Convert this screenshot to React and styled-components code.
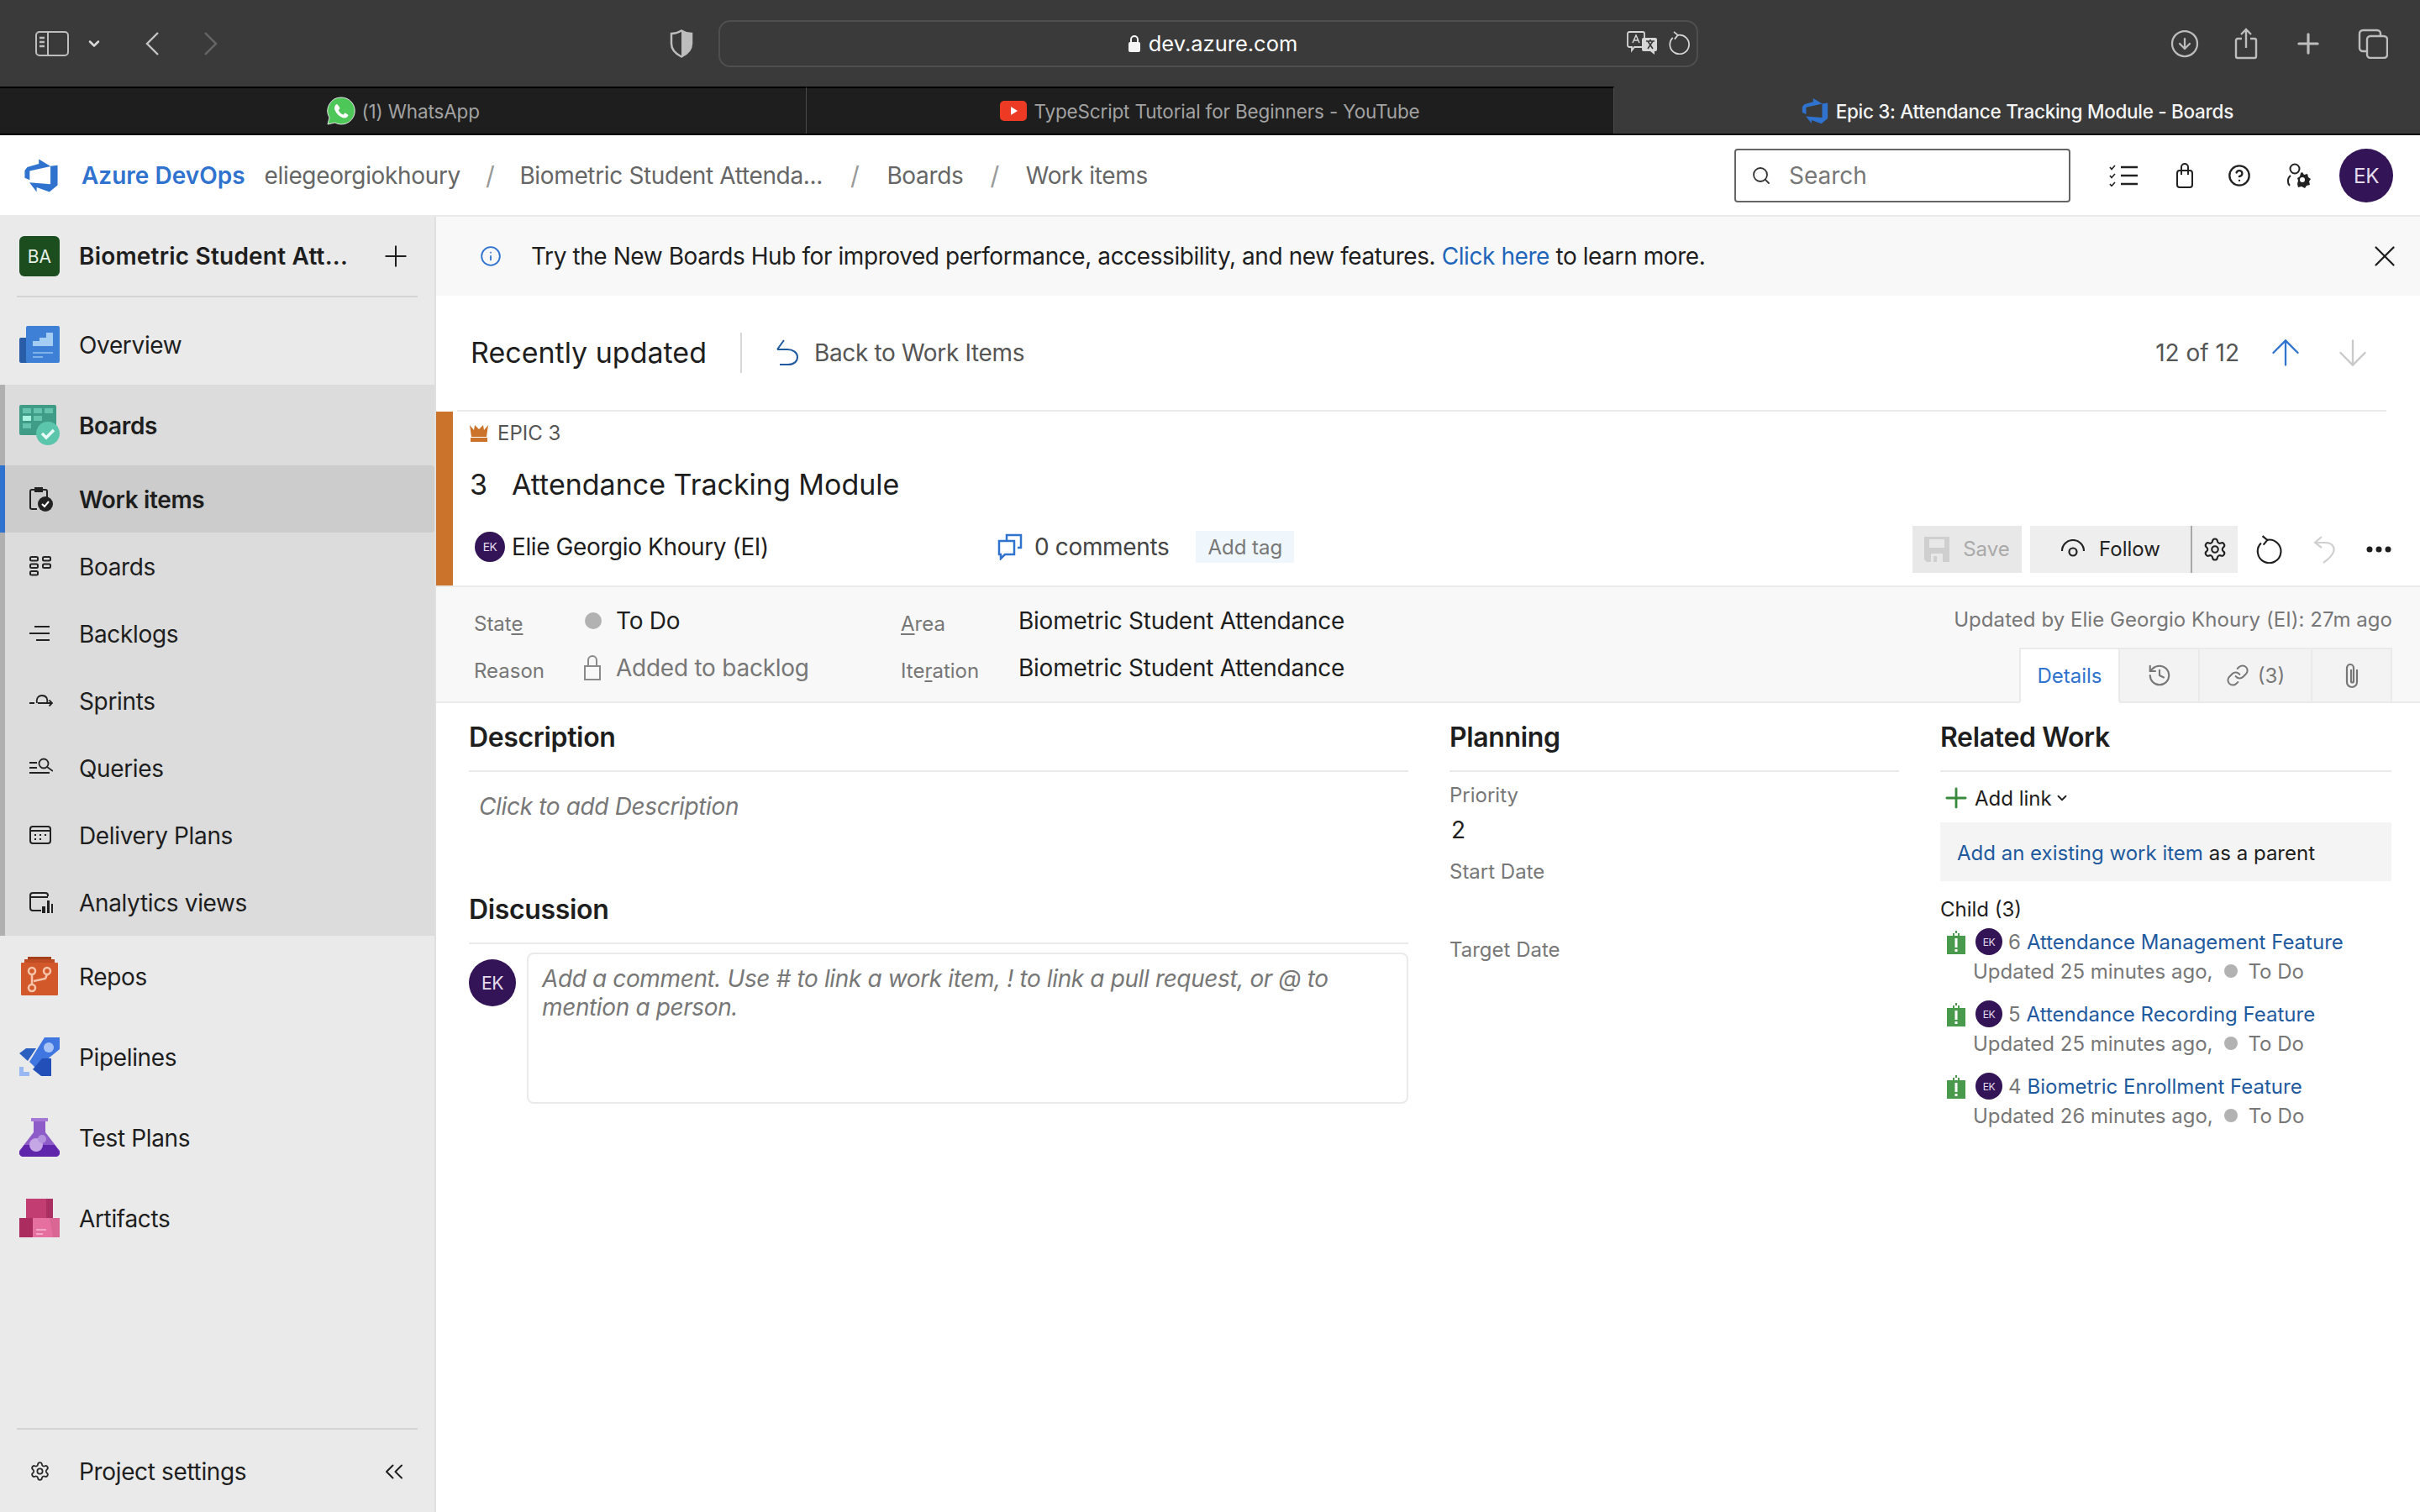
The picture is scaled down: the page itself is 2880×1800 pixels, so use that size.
import styled, { createGlobalStyle } from 'styled-components'
import {
  ArrowDown, ArrowUp, ChevronDown, ChevronsLeft, CircleArrowDown, CircleHelp,
  History, Info, Link, Plus, Search, Settings, X,
} from 'lucide-react'

const GlobalStyle = createGlobalStyle`
  html, body { margin: 0; padding: 0; background: #fff; }
  body { font-family: Inter, "Noto Sans", "Liberation Sans", sans-serif; letter-spacing: -0.35px; overflow: hidden; }
  * { box-sizing: border-box; }
`

const Page = styled.div`
  width: 2880px;
  height: 1800px;
  display: flex;
  flex-direction: column;
  overflow: hidden;
`

/* browser chrome */
const Toolbar = styled.div`
  height: 103px;
  background: #3a3a3a;
  display: flex;
  align-items: center;
  padding: 0 38px 0 42px;
  color: #bdbdbd;
`

const ToolGroup = styled.div`
  display: flex;
  align-items: center;
  gap: ${props => props.$gap || 0}px;
  width: ${props => props.$width ? props.$width + 'px' : 'auto'};
  margin-left: ${props => props.$push ? 'auto' : '0'};
`

const AddressBar = styled.div`
  width: 1166px;
  height: 56px;
  margin-left: 30px;
  padding-left: 10px;
  border: 2px solid #4f4f4f;
  border-radius: 14px;
  display: flex;
  align-items: center;
  justify-content: center;
  position: relative;
  color: #fff;
  font-size: 25.5px;
  letter-spacing: 0;
  gap: 9px;
`

const AddressTools = styled.div`
  position: absolute;
  right: 6px;
  top: 11px;
  display: flex;
  align-items: center;
  gap: 11px;
  color: #d6d6d6;
`

const TabStrip = styled.div`
  height: 58px;
  display: flex;
  background: #1e1e1e;
  border-bottom: 2px solid #000;
`

const BrowserTab = styled.div`
  flex: 1;
  display: flex;
  align-items: center;
  justify-content: center;
  gap: 8px;
  font-size: 22.5px;
  letter-spacing: ${props => props.$active ? -0.3 : -0.15}px;
  font-weight: ${props => props.$active ? 500 : 400};
  color: ${props => props.$active ? '#f4f4f4' : '#a2a2a2'};
  background: ${props => props.$active ? '#3a3a3a' : '#1e1e1e'};
  border-top: 2px solid ${props => props.$active ? '#3a3a3a' : '#000'};
  border-right: ${props => props.$active ? 'none' : '1px solid #4a4a4a'};
`

/* azure header */
const AppHeader = styled.header`
  height: 97px;
  background: #fff;
  border-bottom: 2px solid #eaeaea;
  display: flex;
  align-items: center;
  padding: 0 32px 0 27px;
  font-size: 28px;
  color: #666;
`

const Brand = styled.span`
  font-weight: 600;
  color: #2f73cf;
  margin: 0 23px 0 26px;
  letter-spacing: 0;
`

const Crumb = styled.span`
  white-space: nowrap;
`

const CrumbSlash = styled.span`
  color: #999;
  margin: 0 ${props => props.$gap}px;
  font-size: 30px;
`

const SearchBox = styled.div`
  width: 400px;
  height: 64px;
  margin-left: auto;
  border: 2px solid #666;
  border-radius: 4px;
  display: flex;
  align-items: center;
  gap: 21px;
  padding-left: 18px;
  color: #777;
  font-size: 28px;
  letter-spacing: 0;
`

const HeaderIcons = styled.div`
  display: flex;
  align-items: center;
  gap: 41px;
  margin: 0 34px 0 46px;
  color: #222;
`

const ChecklistSlot = styled.div`
  display: flex;
  margin-right: 5px;
`

const Avatar = styled.div`
  width: ${props => props.$size}px;
  height: ${props => props.$size}px;
  border-radius: 50%;
  background: #321457;
  color: #e4dcec;
  flex: none;
  display: flex;
  align-items: center;
  justify-content: center;
  font-size: ${props => props.$size * 0.38}px;
  letter-spacing: -0.5px;
`

const Body = styled.div`
  flex: 1;
  display: flex;
  min-height: 0;
`

/* project sidebar */
const Sidebar = styled.aside`
  width: 519px;
  flex: none;
  background: #eaeaea;
  border-right: 2px solid #e0e0e0;
  display: flex;
  flex-direction: column;
  color: #1e1e1e;
  font-size: 28px;
`

const ProjectHead = styled.div`
  height: 94px;
  display: flex;
  align-items: center;
  padding: 0 26px 0 23px;
  font-weight: 600;
  letter-spacing: 0.2px;
`

const ProjectBadge = styled.div`
  width: 48px;
  height: 48px;
  margin-right: 23px;
  background: #1c4d1f;
  border-radius: 6px;
  color: #e6f0e6;
  font-size: 21px;
  font-weight: 400;
  display: flex;
  align-items: center;
  justify-content: center;
`

const ProjectName = styled.span`
  flex: 1;
  white-space: nowrap;
`

const Rule = styled.div`
  height: 2px;
  margin: 0 20px;
  background: #d4d4d4;
`

const NavList = styled.nav`
  margin-top: 8px;
  display: flex;
  flex-direction: column;
`

const NavRow = styled.div`
  height: ${props => props.$sub ? 80 : 96}px;
  padding-top: 2px;
  display: flex;
  align-items: center;
  font-weight: ${props => props.$bold ? 600 : 400};
`

const NavIcon = styled.div`
  width: 94px;
  flex: none;
  margin-top: -2px;
  padding-left: ${props => props.$sub ? 35 : 23}px;
  display: flex;
  align-items: center;
  color: #2a2a2a;
`

const NavSection = styled.div`
  background: #dcdcdc;
  border-left: 6px solid #b0b0b0;
`

const SectionRow = styled(NavRow)`
  margin-left: -6px;
  border-radius: 0 4px 4px 0;
  border-left: 6px solid ${props => props.$selected ? '#2f73cf' : 'transparent'};
  background: ${props => props.$selected ? '#cccccc' : 'transparent'};
  ${NavIcon} { margin-left: -6px; }
`

const SideFooter = styled.div`
  margin-top: auto;
`

const FooterRow = styled.div`
  height: 98px;
  display: flex;
  align-items: center;
  padding: 2px 30px 0 0;
`

const FooterLabel = styled.span`
  flex: 1;
`

/* main */
const Main = styled.main`
  flex: 1;
  min-width: 0;
  display: flex;
  flex-direction: column;
  color: #1e1e1e;
`

const Banner = styled.div`
  height: 94px;
  background: #f8f8f8;
  display: flex;
  align-items: center;
  padding: 0 21px 0 52px;
  font-size: 28px;
  letter-spacing: -0.42px;
`

const BannerText = styled.span`
  flex: 1;
  margin-left: 35px;
`

const BlueLink = styled.span`
  color: ${props => props.$dark ? '#1f5a9e' : '#1f66bb'};
`

const TitleBar = styled.div`
  height: 136px;
  display: flex;
  align-items: center;
  padding: 0 55px 0 41px;
`

const RecentTitle = styled.h1`
  margin: 0;
  font-size: 34px;
  font-weight: 400;
  letter-spacing: 0;
  padding-right: 40px;
  border-right: 2px solid #d8d8d8;
  line-height: 48px;
`

const BackLink = styled.div`
  display: flex;
  align-items: center;
  gap: 18px;
  margin-left: 40px;
  font-size: 28px;
  color: #555;
`

const Pager = styled.div`
  margin-left: auto;
  display: flex;
  align-items: center;
  gap: 30px;
  font-size: 28px;
  letter-spacing: 0;
  color: #555;
`

const ItemRule = styled.div`
  height: 2px;
  margin: 0 40px 0 25px;
  background: #eaeaea;
`

const ItemHead = styled.div`
  height: 207px;
  border-left: 20px solid #cb732b;
  padding: 0 17px 0 20px;
  display: flex;
  flex-direction: column;
`

const EpicTag = styled.div`
  height: 50px;
  display: flex;
  align-items: center;
  gap: 11px;
  font-size: 24px;
  letter-spacing: 0;
  color: #555;
`

const ItemTitle = styled.div`
  height: 72px;
  display: flex;
  align-items: center;
  gap: 29px;
  font-size: 34px;
  letter-spacing: 0;
`

const ItemMeta = styled.div`
  height: 70px;
  margin-top: 4px;
  display: flex;
  align-items: center;
  font-size: 28px;
`

const Assignee = styled.div`
  width: 628px;
  padding-left: 6px;
  display: flex;
  align-items: center;
  gap: 8px;
  letter-spacing: -0.4px;
`

const CommentCount = styled.div`
  display: flex;
  align-items: center;
  gap: 14px;
  color: #444;
`

const TagChip = styled.span`
  margin-left: 32px;
  height: 38px;
  padding: 0 14px;
  background: #eff6fc;
  color: #777;
  font-size: 24px;
  letter-spacing: 0;
  display: flex;
  align-items: center;
`

const ItemActions = styled.div`
  margin: 5px 0 0 auto;
  display: flex;
  align-items: center;
`

const ActionButton = styled.div`
  height: 56px;
  display: flex;
  align-items: center;
  justify-content: center;
  gap: 16px;
  width: ${props => props.$width}px;
  margin-right: ${props => props.$gap || 0}px;
  background: ${props => props.$muted ? '#e8e8e8' : '#eeeeee'};
  color: ${props => props.$muted ? '#aaa' : '#222'};
  border-left: ${props => props.$split ? '2px solid #a8a8a8' : 'none'};
  font-size: 24px;
  letter-spacing: 0;
`

const PlainAction = styled.div`
  width: 65px;
  display: flex;
  justify-content: center;
  color: ${props => props.$muted ? '#cfcfcf' : '#1e1e1e'};
`

const FieldBand = styled.div`
  height: 140px;
  background: #f8f8f8;
  border-top: 2px solid #eaeaea;
  border-bottom: 2px solid #eaeaea;
  display: flex;
  justify-content: space-between;
  padding: 12px 33px 0 45px;
`

const FieldGrid = styled.div`
  display: grid;
  grid-template-columns: 131px 377px 140px auto;
  grid-template-rows: 56px 56px;
  align-items: center;
  font-size: 28px;
  letter-spacing: -0.25px;
`

const FieldLabel = styled.span`
  font-size: 24px;
  letter-spacing: 0;
  color: #777;
  padding-top: 6px;
  u { text-underline-offset: 3px; }
`

const FieldValue = styled.span`
  display: flex;
  align-items: center;
  gap: ${props => props.$gap || 18}px;
  color: ${props => props.$muted ? '#777' : '#1e1e1e'};
`

const StateDot = styled.span`
  width: ${props => props.$size || 20}px;
  height: ${props => props.$size || 20}px;
  margin: 0 ${props => props.$side || 0}px;
  border-radius: 50%;
  background: #b2b2b2;
  flex: none;
`

const BandRight = styled.div`
  display: flex;
  flex-direction: column;
  align-items: flex-end;
`

const UpdatedBy = styled.div`
  font-size: 24px;
  letter-spacing: 0.05px;
  color: #777;
  height: 52px;
  display: flex;
  align-items: center;
`

const DetailTabs = styled.div`
  display: flex;
  margin-top: auto;
  margin-bottom: -2px;
  height: 66px;
`

const DetailTab = styled.div`
  width: ${props => props.$width}px;
  display: flex;
  align-items: center;
  justify-content: center;
  gap: 10px;
  font-size: 24px;
  letter-spacing: 0;
  color: ${props => props.$active ? '#2f73cf' : '#777'};
  background: ${props => props.$active ? '#fff' : '#f3f3f3'};
  border: 2px solid #eaeaea;
  border-left-width: ${props => props.$first ? 2 : 0}px;
  border-bottom-color: ${props => props.$active ? '#fff' : '#eaeaea'};
`

const Columns = styled.div`
  flex: 1;
  display: grid;
  grid-template-columns: 1118px 535px 537px;
  column-gap: 49px;
  padding: 0 33px 0 39px;
`

const Column = styled.section`
  display: flex;
  flex-direction: column;
`

const SectionHead = styled.h2`
  margin: 0;
  height: 82px;
  display: flex;
  align-items: center;
  font-size: 32px;
  font-weight: 600;
  border-bottom: 2px solid #eaeaea;
  color: #1e1e1e;
`

const EmptyText = styled.div`
  height: 123px;
  padding: 24px 12px;
  font-size: 28px;
  font-style: italic;
  color: #777;
`

const CommentRow = styled.div`
  display: flex;
  gap: 13px;
  margin-top: 10px;
`

const CommentAvatarSlot = styled.div`
  padding-top: 8px;
`

const CommentBox = styled.div`
  flex: 1;
  height: 180px;
  border: 2px solid #eaeaea;
  border-radius: 8px;
  padding: 12px 16px;
  font-size: 28px;
  line-height: 34px;
  letter-spacing: -0.38px;
  font-style: italic;
  color: #777;
`

const PlanLabel = styled.div`
  font-size: 24px;
  letter-spacing: 0;
  color: #777;
  height: 32px;
  display: flex;
  align-items: center;
  margin-top: ${props => props.$top}px;
`

const PlanValue = styled.div`
  font-size: 28px;
  margin: 9px 0 0 2px;
  line-height: 34px;
`

const AddLink = styled.div`
  height: 60px;
  padding-top: 2px;
  display: flex;
  align-items: center;
  gap: 3px;
  font-size: 24px;
  letter-spacing: 0;
`

const ParentBox = styled.div`
  height: 70px;
  background: #f4f4f4;
  display: flex;
  align-items: center;
  padding: 2px 0 0 20px;
  font-size: 24px;
  letter-spacing: 0;
  gap: 7px;
`

const ChildHead = styled.div`
  font-size: 24px;
  letter-spacing: 0;
  line-height: 32px;
  margin: 18px 0 -2px;
`

const ChildItem = styled.div`
  display: grid;
  grid-template-columns: 32px 1fr;
  height: 86px;
  padding: 8px 0 0 8px;
  font-size: 24px;
  letter-spacing: 0;
`

const ChildIconSlot = styled.div`
  padding-top: 1px;
`

const ChildTitle = styled.div`
  display: flex;
  align-items: center;
  gap: 7px;
  height: 32px;
  margin-left: 2px;
  color: #777;
`

const ChildMeta = styled.div`
  display: flex;
  align-items: center;
  height: 34px;
  margin: 2px 0 0 -1px;
  color: #777;
`

/* drawings */
const AzureLogo = ({ size }) => (
  <svg width={size} height={size} viewBox="0 0 18 18">
    <path fill="#2f73cf" d="M17 4v9.74l-4 3.28-6.2-2.26V17L3.29 12.41l10.23.8V4.44zm-3.41.49L7.85 1v2.29L2.23 4.94 1 6.52v3.59l2.41 1.06V6.7z" />
  </svg>
)

const SidebarToggle = () => (
  <svg width="40" height="30" viewBox="0 0 40 30" fill="none" stroke="#bdbdbd" strokeWidth="2">
    <rect x="1" y="1" width="38" height="28" rx="4" />
    <path d="M15 1v28" />
    <path d="M5 8h6M5 13h6M5 18h6" strokeWidth="2.5" />
  </svg>
)

const NavChevron = ({ flip, color }) => (
  <svg width="18" height="30" viewBox="0 0 18 30" fill="none" stroke={color} strokeWidth="2.4" style={{ transform: flip ? 'scaleX(-1)' : 'none' }}>
    <path d="M16 2L3 15l13 13" />
  </svg>
)

const ShieldIcon = () => (
  <svg width="28" height="34" viewBox="0 0 28 34">
    <path d="M14 1.5c4 2.5 8 3.5 12 3.5v12c0 7-5 12-12 15.500C7 29 2 24 2 17V5c4 0 8-1 12-3.500z" fill="none" stroke="#bdbdbd" strokeWidth="2.500" />
    <path d="M14 1.500c4 2.500 8 3.500 12 3.500v12c0 7-5 12-12 15.500z" fill="#bdbdbd" />
  </svg>
)

const PadLock = () => (
  <svg width="16" height="22" viewBox="0 0 16 22" fill="#f4f4f4">
    <path d="M3 9V6a5 5 0 0 1 10 0v3h-2V6a3 3 0 0 0-6 0v3z" />
    <rect x="1" y="9" width="14" height="12" rx="2" />
  </svg>
)

const TranslateIcon = () => (
  <svg width="38" height="28" viewBox="0 0 38 28">
    <path d="M3 1h16a2 2 0 0 1 2 2v14a2 2 0 0 1-2 2H9l-3 4v-4H3a2 2 0 0 1-2-2V3a2 2 0 0 1 2-2z" fill="#3a3a3a" stroke="#d6d6d6" strokeWidth="1.800" />
    <path d="M20 8h14a2 2 0 0 1 2 2v12a2 2 0 0 1-2 2h-1v4l-5-4h-8a2 2 0 0 1-2-2V10a2 2 0 0 1 2-2z" fill="#d6d6d6" />
    <path d="M7 14l4-9 4 9M9 11h4" fill="none" stroke="#d6d6d6" strokeWidth="1.500" />
    <path d="M23 12h10M28 10v2M25 21l6-9M31 21l-6-9" fill="none" stroke="#3a3a3a" strokeWidth="1.600" />
  </svg>
)

const ReloadIcon = ({ size, weight }) => (
  <svg width={size} height={size} viewBox="0 0 32 32" fill="none" stroke="currentColor" strokeWidth={weight}>
    <path d="M13 5.500A13 13 0 1 1 6.500 9" />
    <path d="M8 1l5.500 4.500L9 11" />
  </svg>
)

const ShareIcon = () => (
  <svg width="30" height="38" viewBox="0 0 30 38" fill="none" stroke="#bdbdbd" strokeWidth="2.400">
    <path d="M10 13H5a2 2 0 0 0-2 2v19a2 2 0 0 0 2 2h20a2 2 0 0 0 2-2V15a2 2 0 0 0-2-2h-5" />
    <path d="M15 24V2M9 8l6-6 6 6" />
  </svg>
)

const TabsIcon = () => (
  <svg width="36" height="36" viewBox="0 0 36 36" fill="none" stroke="#bdbdbd" strokeWidth="2.400">
    <rect x="11" y="9" width="24" height="26" rx="4" />
    <path d="M11 27H6a4 4 0 0 1-4-4V6a4 4 0 0 1 4-4h17a4 4 0 0 1 4 4v3" />
  </svg>
)

const WhatsAppIcon = () => (
  <svg width="34" height="34" viewBox="0 0 34 34">
    <path d="M17 1a16 16 0 0 0-14 24L1 33l8.500-2A16 16 0 1 0 17 1z" fill="#4ec759" stroke="#e8e8e8" strokeWidth="1" />
    <path d="M12 9c-1 0-3 2-3 4.500 0 5 7 12 12 12 2.500 0 4.500-2 4.500-3.500 0-.5-3.500-2.500-4-2.500s-1.500 2-2 2c-2 0-5.500-4-5.500-5.500 0-.5 1.500-1.500 1.500-2S13 9 12 9z" fill="#fff" />
  </svg>
)

const YouTubeIcon = () => (
  <svg width="32" height="24" viewBox="0 0 32 24">
    <rect width="32" height="24" rx="5" fill="#ec3a24" />
    <path d="M13 7l8 5-8 5z" fill="#fff" />
  </svg>
)

const ChecklistIcon = () => (
  <svg width="34" height="26" viewBox="0 0 34 26" fill="none" stroke="#222">
    <path d="M14 3h20M14 13h20M14 23h20" strokeWidth="2.400" />
    <path d="M1 3l2 2.500L7 1M1 13l2 2.500L7 11M1 23l2 2.500L7 21" strokeWidth="1.600" />
  </svg>
)

const BagIcon = () => (
  <svg width="20" height="30" viewBox="0 0 20 30" fill="none" stroke="#222" strokeWidth="2">
    <rect x="1" y="9" width="18" height="20" rx="3" />
    <path d="M6 14V5a4 4 0 0 1 8 0v9M6 9h8" />
  </svg>
)

const GearUserIcon = () => (
  <svg width="30" height="32" viewBox="0 0 30 32" fill="none" stroke="#222" strokeWidth="2">
    <circle cx="11" cy="8" r="5.500" />
    <path d="M5 28c-3-3-3-9 1-12" />
    <path d="M20 12l2 3 4-1 1 4 3 2-2 3 1 4-4 1-2 3-4-2-4 1-1-4 1-4-1-3 3-2 1-4z" fill="#222" stroke="none" />
    <circle cx="20" cy="21" r="3" fill="#fff" stroke="none" />
  </svg>
)

const OverviewIcon = () => (
  <svg width="48" height="44" viewBox="0 0 48 44">
    <rect x="0" y="14" width="12" height="30" rx="2" fill="#2a5da8" />
    <rect x="8" y="0" width="40" height="44" rx="2" fill="#3d80d6" />
    <path d="M16 24v-6h8v-4h8v-6h8v16z" fill="#a5cdf3" />
    <path d="M16 31h24v2H16zM16 36h12v2H16z" fill="#7fb2e8" />
  </svg>
)

const BoardsIcon = () => (
  <svg width="48" height="48" viewBox="0 0 48 48">
    <rect width="44" height="36" rx="2" fill="#3f9c86" />
    <path d="M4 4h10v6H4zM17 4h10v6H17zM30 4h10v6H30zM17 13h10v6H17zM4 22h10v6H4z" fill="#66c4ac" />
    <rect x="4" y="13" width="10" height="6" fill="#a9f3e0" />
    <circle cx="34" cy="34" r="14" fill="#5cc6ac" />
    <path d="M27 34l5 5 9-9" fill="none" stroke="#e9fbf6" strokeWidth="3.500" />
  </svg>
)

const WorkItemsIcon = () => (
  <svg width="28" height="30" viewBox="0 0 28 30" fill="none" stroke="#222" strokeWidth="2">
    <path d="M9 27H3a2 2 0 0 1-2-2V6a2 2 0 0 1 2-2h16a2 2 0 0 1 2 2v8" />
    <path d="M7 2h8v4H7z" />
    <circle cx="19" cy="21" r="9" fill="#222" stroke="none" />
    <path d="M15 21l3 3 5-6" stroke="#fff" />
  </svg>
)

const KanbanIcon = () => (
  <svg width="26" height="24" viewBox="0 0 26 24" fill="none" stroke="#222" strokeWidth="2">
    <rect x="1" y="1" width="9" height="4.500" rx="1.500" /><rect x="16" y="1" width="9" height="4.500" rx="1.500" />
    <rect x="1" y="9.500" width="9" height="4.500" rx="1.500" /><rect x="16" y="9.500" width="9" height="4.500" rx="1.500" />
    <rect x="1" y="18" width="9" height="4.500" rx="1.500" />
  </svg>
)

const BacklogIcon = () => (
  <svg width="24" height="20" viewBox="0 0 24 20" fill="none" stroke="#222" strokeWidth="2">
    <path d="M6 2h18M0 10h24M8 18h16" />
  </svg>
)

const SprintIcon = () => (
  <svg width="28" height="16" viewBox="0 0 28 16" fill="none" stroke="#222" strokeWidth="1.800">
    <path d="M0 11h6M10 11h17M23.500 7.500L27 11l-3.500 3.500" />
    <path d="M9 11c-1-3 0-9 6-9s7 5 6 9" />
  </svg>
)

const QueryIcon = () => (
  <svg width="28" height="24" viewBox="0 0 28 24" fill="none" stroke="#222" strokeWidth="1.800">
    <path d="M0 6h9M0 12h9M0 18h24" />
    <circle cx="17" cy="7" r="5.500" /><path d="M21 11l7 5" />
  </svg>
)

const DeliveryIcon = () => (
  <svg width="26" height="24" viewBox="0 0 26 24" fill="none" stroke="#222" strokeWidth="2">
    <rect x="1" y="2" width="24" height="20" rx="3" />
    <path d="M1 7h24M6 12h2M12 12h2M18 12h2M6 17h2M12 17h2" />
  </svg>
)

const AnalyticsIcon = () => (
  <svg width="28" height="26" viewBox="0 0 28 26" fill="none" stroke="#222" strokeWidth="2">
    <path d="M14 23H4a3 3 0 0 1-3-3V5a3 3 0 0 1 3-3h15a3 3 0 0 1 3 3v1M1 7h21" />
    <path d="M15 18h4v8h-4zM21 11h3v15h-3zM26 15h2v11h-2z" fill="#222" stroke="none" />
  </svg>
)

const ReposIcon = () => (
  <svg width="48" height="48" viewBox="0 0 48 48">
    <path d="M10 1h28v6H10z" fill="#a5401b" />
    <path d="M6 4h36v6H6z" fill="#bf4c22" />
    <rect x="2" y="8" width="44" height="39" rx="1" fill="#d2582a" />
    <g fill="none" stroke="#f6c3ab" strokeWidth="2.500">
      <circle cx="15" cy="18" r="4" /><circle cx="33" cy="18" r="4" /><circle cx="15" cy="38" r="4" />
      <path d="M15 22v12M17 30l14-3 2-5" />
    </g>
  </svg>
)

const PipelinesIcon = () => (
  <svg width="48" height="48" viewBox="0 0 48 48">
    <path d="M20 14l-12 0L0 20l10 9z" fill="#2b5fc0" />
    <path d="M12 30L30 1h18v14L20 38z" fill="#3f76e0" />
    <path d="M27 26l11 0v21H26l-10-8z" fill="#2350b8" />
    <circle cx="35" cy="13" r="6" fill="#a8c4f6" />
    <path d="M0 36h5v6h7v5H0z" fill="#98b8f4" />
  </svg>
)

const TestPlansIcon = () => (
  <svg width="48" height="48" viewBox="0 0 48 48">
    <path d="M14 1h20v4H14z" fill="#a578d8" />
    <path d="M17 5h14v13l17 22a5 5 0 0 1-4 7H4a5 5 0 0 1-4-7l17-22z" fill="#8e5cc9" />
    <path d="M6 33h36l6 8a5 5 0 0 1-4 6H4a5 5 0 0 1-4-6z" fill="#5f25ab" />
    <circle cx="20" cy="33" r="8" fill="#c6a7e6" /><circle cx="27" cy="26" r="5" fill="#b393de" />
  </svg>
)

const ArtifactsIcon = () => (
  <svg width="48" height="48" viewBox="0 0 48 48">
    <rect x="8" y="1" width="32" height="24" fill="#c23d72" />
    <rect x="32" y="1" width="8" height="24" fill="#a93060" />
    <rect x="0" y="24" width="16" height="23" fill="#ab2c5f" />
    <rect x="16" y="24" width="32" height="23" fill="#e56f9f" />
    <path d="M36 24h12v23H40z" fill="#d96693" />
    <path d="M20 37h12v2H20zM20 42h8v2h-8z" fill="#f3a6c5" />
  </svg>
)

const CrownIcon = () => (
  <svg width="22" height="24" viewBox="0 0 22 24" fill="#cb732b">
    <path d="M0 3l5 6 1-6 5 5 5-5 1 6 5-6-2 14H2z" />
    <rect x="1" y="18" width="20" height="5" />
  </svg>
)

const BackIcon = () => (
  <svg width="28" height="34" viewBox="0 0 28 34" fill="none" stroke="#1f5a9e" strokeWidth="2">
    <path d="M2 13l8-11M2 13l12 0c7 0 12 4 12 9s-4 9-11 9H5" />
  </svg>
)

const CommentsIcon = () => (
  <svg width="30" height="32" viewBox="0 0 30 32" fill="none" stroke="#2f73cf" strokeWidth="2.500">
    <path d="M11 9V2h17v15h-4" />
    <path d="M2 9h18v16H9l-5 5v-5H2z" />
  </svg>
)

const SaveIcon = () => (
  <svg width="30" height="30" viewBox="0 0 30 30" fill="#cfcfcf">
    <path d="M0 0h30v30H22V20H8v10H3l-3-3z" />
    <rect x="11" y="23" width="4" height="7" />
    <rect x="6" y="3" width="18" height="10" fill="#e8e8e8" />
  </svg>
)

const FollowIcon = () => (
  <svg width="30" height="24" viewBox="0 0 30 24" fill="none" stroke="#222" strokeWidth="2.200">
    <path d="M2 14a13 13 0 0 1 26 0" />
    <circle cx="15" cy="15" r="4.500" />
  </svg>
)

const UndoIcon = () => (
  <svg width="28" height="36" viewBox="0 0 28 36" fill="none" stroke="currentColor" strokeWidth="2.200">
    <path d="M11 3L3 10l8 6" />
    <path d="M3 10h12c8 0 12 5 10 11s-8 10-12 13" />
  </svg>
)

const LockIcon = () => (
  <svg width="20" height="30" viewBox="0 0 20 30" fill="none" stroke="#8a8a8a" strokeWidth="2">
    <rect x="1" y="13" width="18" height="16" />
    <path d="M5 13V6a5 5 0 0 1 10 0v7" />
  </svg>
)

const PaperclipIcon = () => (
  <svg width="18" height="32" viewBox="0 0 18 32" fill="none" stroke="#777" strokeWidth="2.200">
    <path d="M15 9v15a6 6 0 0 1-12 0V7a4 4 0 0 1 8 0v16a1.500 1.500 0 0 1-3 0V9" />
  </svg>
)

const ReqIcon = () => (
  <svg width="22" height="30" viewBox="0 0 22 30">
    <path d="M7 5h3V2h2v3h3v3h7v22H0V8h7z" fill="#4a9a4d" />
    <path d="M9.500 11h3v11h-3zM9.500 24h3v3h-3z" fill="#fff" />
    <path d="M9 5h4v3H9z" fill="#fff" />
  </svg>
)

const navTop = { label: 'Overview', icon: <OverviewIcon /> }

const boardsItems = [
  { label: 'Work items', icon: <WorkItemsIcon />, selected: true },
  { label: 'Boards', icon: <KanbanIcon /> },
  { label: 'Backlogs', icon: <BacklogIcon /> },
  { label: 'Sprints', icon: <SprintIcon /> },
  { label: 'Queries', icon: <QueryIcon /> },
  { label: 'Delivery Plans', icon: <DeliveryIcon /> },
  { label: 'Analytics views', icon: <AnalyticsIcon /> },
]

const navBottom = [
  { label: 'Repos', icon: <ReposIcon /> },
  { label: 'Pipelines', icon: <PipelinesIcon /> },
  { label: 'Test Plans', icon: <TestPlansIcon /> },
  { label: 'Artifacts', icon: <ArtifactsIcon /> },
]

const children = [
  { id: 6, title: 'Attendance Management Feature', updated: 'Updated 25 minutes ago,' },
  { id: 5, title: 'Attendance Recording Feature', updated: 'Updated 25 minutes ago,' },
  { id: 4, title: 'Biometric Enrollment Feature', updated: 'Updated 26 minutes ago,' },
]

const BrowserChrome = () => (
  <>
    <Toolbar>
      <ToolGroup $width={130} $gap={20}>
        <SidebarToggle />
        <ChevronDown size={20} strokeWidth={3} color="#d8d8d8" />
      </ToolGroup>
      <ToolGroup $width={625} $gap={52}>
        <NavChevron color="#c4c4c4" />
        <NavChevron flip color="#666" />
      </ToolGroup>
      <ShieldIcon />
      <AddressBar>
        <PadLock />
        dev.azure.com
        <AddressTools>
          <TranslateIcon />
          <ReloadIcon size={28} weight={2} />
        </AddressTools>
      </AddressBar>
      <ToolGroup $gap={40} $push>
        <CircleArrowDown size={36} strokeWidth={1.500} />
        <ShareIcon />
        <Plus size={38} strokeWidth={2} />
        <TabsIcon />
      </ToolGroup>
    </Toolbar>
    <TabStrip>
      <BrowserTab><WhatsAppIcon />(1) WhatsApp</BrowserTab>
      <BrowserTab><YouTubeIcon />TypeScript Tutorial for Beginners - YouTube</BrowserTab>
      <BrowserTab $active><AzureLogo size={34} />Epic 3: Attendance Tracking Module - Boards</BrowserTab>
    </TabStrip>
  </>
)

const TopBar = () => (
  <AppHeader>
    <AzureLogo size={44} />
    <Brand>Azure DevOps</Brand>
    <Crumb>eliegeorgiokhoury</Crumb>
    <CrumbSlash $gap={30}>/</CrumbSlash>
    <Crumb>Biometric Student Attenda...</Crumb>
    <CrumbSlash $gap={33}>/</CrumbSlash>
    <Crumb>Boards</Crumb>
    <CrumbSlash $gap={32}>/</CrumbSlash>
    <Crumb>Work items</Crumb>
    <SearchBox>
      <Search size={24} strokeWidth={1.800} color="#333" />
      Search
    </SearchBox>
    <HeaderIcons>
      <ChecklistSlot><ChecklistIcon /></ChecklistSlot>
      <BagIcon />
      <CircleHelp size={28} strokeWidth={2} />
      <GearUserIcon />
    </HeaderIcons>
    <Avatar $size={64}>EK</Avatar>
  </AppHeader>
)

const ProjectNav = () => (
  <Sidebar>
    <ProjectHead>
      <ProjectBadge>BA</ProjectBadge>
      <ProjectName>Biometric Student Att...</ProjectName>
      <Plus size={40} strokeWidth={1.200} />
    </ProjectHead>
    <Rule />
    <NavList>
      <NavRow><NavIcon>{navTop.icon}</NavIcon>{navTop.label}</NavRow>
      <NavSection>
        <SectionRow $bold><NavIcon><BoardsIcon /></NavIcon>Boards</SectionRow>
        {boardsItems.map(item => (
          <SectionRow key={item.label} $sub $bold={item.selected} $selected={item.selected}>
            <NavIcon $sub>{item.icon}</NavIcon>{item.label}
          </SectionRow>
        ))}
      </NavSection>
      {navBottom.map(item => (
        <NavRow key={item.label}><NavIcon>{item.icon}</NavIcon>{item.label}</NavRow>
      ))}
    </NavList>
    <SideFooter>
      <Rule />
      <FooterRow>
        <NavIcon $sub><Settings size={25} strokeWidth={1.700} /></NavIcon>
        <FooterLabel>Project settings</FooterLabel>
        <ChevronsLeft size={36} strokeWidth={1.300} />
      </FooterRow>
    </SideFooter>
  </Sidebar>
)

const WorkItemHeader = () => (
  <ItemHead>
    <EpicTag><CrownIcon />EPIC 3</EpicTag>
    <ItemTitle><span>3</span><span>Attendance Tracking Module</span></ItemTitle>
    <ItemMeta>
      <Assignee><Avatar $size={36}>EK</Avatar>Elie Georgio Khoury (EI)</Assignee>
      <CommentCount><CommentsIcon />0 comments</CommentCount>
      <TagChip>Add tag</TagChip>
      <ItemActions>
        <ActionButton $muted $width={130} $gap={10}><SaveIcon />Save</ActionButton>
        <ActionButton $width={191}><FollowIcon />Follow</ActionButton>
        <ActionButton $split $width={56} $gap={5}><Settings size={30} strokeWidth={1.700} /></ActionButton>
        <PlainAction><ReloadIcon size={34} weight={2} /></PlainAction>
        <PlainAction $muted><UndoIcon /></PlainAction>
        <PlainAction>
          <svg width="30" height="8" viewBox="0 0 30 8" fill="#1e1e1e"><circle cx="4" cy="4" r="3.500" /><circle cx="15" cy="4" r="3.500" /><circle cx="26" cy="4" r="3.500" /></svg>
        </PlainAction>
      </ItemActions>
    </ItemMeta>
  </ItemHead>
)

const Fields = () => (
  <FieldBand>
    <FieldGrid>
      <FieldLabel>Stat<u>e</u></FieldLabel>
      <FieldValue $gap={16}><StateDot $side={1} />To Do</FieldValue>
      <FieldLabel><u>A</u>rea</FieldLabel>
      <FieldValue>Biometric Student Attendance</FieldValue>
      <FieldLabel>Reason</FieldLabel>
      <FieldValue $muted><LockIcon />Added to backlog</FieldValue>
      <FieldLabel>Ite<u>r</u>ation</FieldLabel>
      <FieldValue>Biometric Student Attendance</FieldValue>
    </FieldGrid>
    <BandRight>
      <UpdatedBy>Updated by Elie Georgio Khoury (EI): 27m ago</UpdatedBy>
      <DetailTabs>
        <DetailTab $active $first $width={120}>Details</DetailTab>
        <DetailTab $width={95}><History size={30} strokeWidth={1.700} /></DetailTab>
        <DetailTab $width={134}><Link size={28} strokeWidth={1.700} />(3)</DetailTab>
        <DetailTab $width={95}><PaperclipIcon /></DetailTab>
      </DetailTabs>
    </BandRight>
  </FieldBand>
)

const RelatedWork = () => (
  <Column>
    <SectionHead>Related Work</SectionHead>
    <AddLink>
      <Plus size={38} strokeWidth={1.800} color="#3a8a3d" />
      Add link
      <ChevronDown size={18} strokeWidth={2.400} />
    </AddLink>
    <ParentBox><BlueLink $dark>Add an existing work item</BlueLink>as a parent</ParentBox>
    <ChildHead>Child (3)</ChildHead>
    {children.map(child => (
      <ChildItem key={child.id}>
        <ChildIconSlot><ReqIcon /></ChildIconSlot>
        <div>
          <ChildTitle>
            <Avatar $size={32}>EK</Avatar>
            {child.id}
            <BlueLink $dark>{child.title}</BlueLink>
          </ChildTitle>
          <ChildMeta>{child.updated}<StateDot $size={16} $side={13} />To Do</ChildMeta>
        </div>
      </ChildItem>
    ))}
  </Column>
)

const App = () => (
  <Page>
    <GlobalStyle />
    <BrowserChrome />
    <TopBar />
    <Body>
      <ProjectNav />
      <Main>
        <Banner>
          <Info size={26} strokeWidth={1.700} color="#2f73cf" />
          <BannerText>
            Try the New Boards Hub for improved performance, accessibility, and new features. <BlueLink>Click here</BlueLink> to learn more.
          </BannerText>
          <X size={42} strokeWidth={1.300} />
        </Banner>
        <TitleBar>
          <RecentTitle>Recently updated</RecentTitle>
          <BackLink><BackIcon />Back to Work Items</BackLink>
          <Pager>
            12 of 12
            <ArrowUp size={50} strokeWidth={1.100} color="#2f73cf" />
            <ArrowDown size={50} strokeWidth={1.100} color="#c8c8c8" />
          </Pager>
        </TitleBar>
        <ItemRule />
        <WorkItemHeader />
        <Fields />
        <Columns>
          <Column>
            <SectionHead>Description</SectionHead>
            <EmptyText>Click to add Description</EmptyText>
            <SectionHead>Discussion</SectionHead>
            <CommentRow>
              <CommentAvatarSlot><Avatar $size={56}>EK</Avatar></CommentAvatarSlot>
              <CommentBox>Add a comment. Use # to link a work item, ! to link a pull request, or @ to mention a person.</CommentBox>
            </CommentRow>
          </Column>
          <Column>
            <SectionHead>Planning</SectionHead>
            <PlanLabel $top={11}>Priority</PlanLabel>
            <PlanValue>2</PlanValue>
            <PlanLabel $top={16}>Start Date</PlanLabel>
            <PlanLabel $top={61}>Target Date</PlanLabel>
          </Column>
          <RelatedWork />
        </Columns>
      </Main>
    </Body>
  </Page>
)

export default App
